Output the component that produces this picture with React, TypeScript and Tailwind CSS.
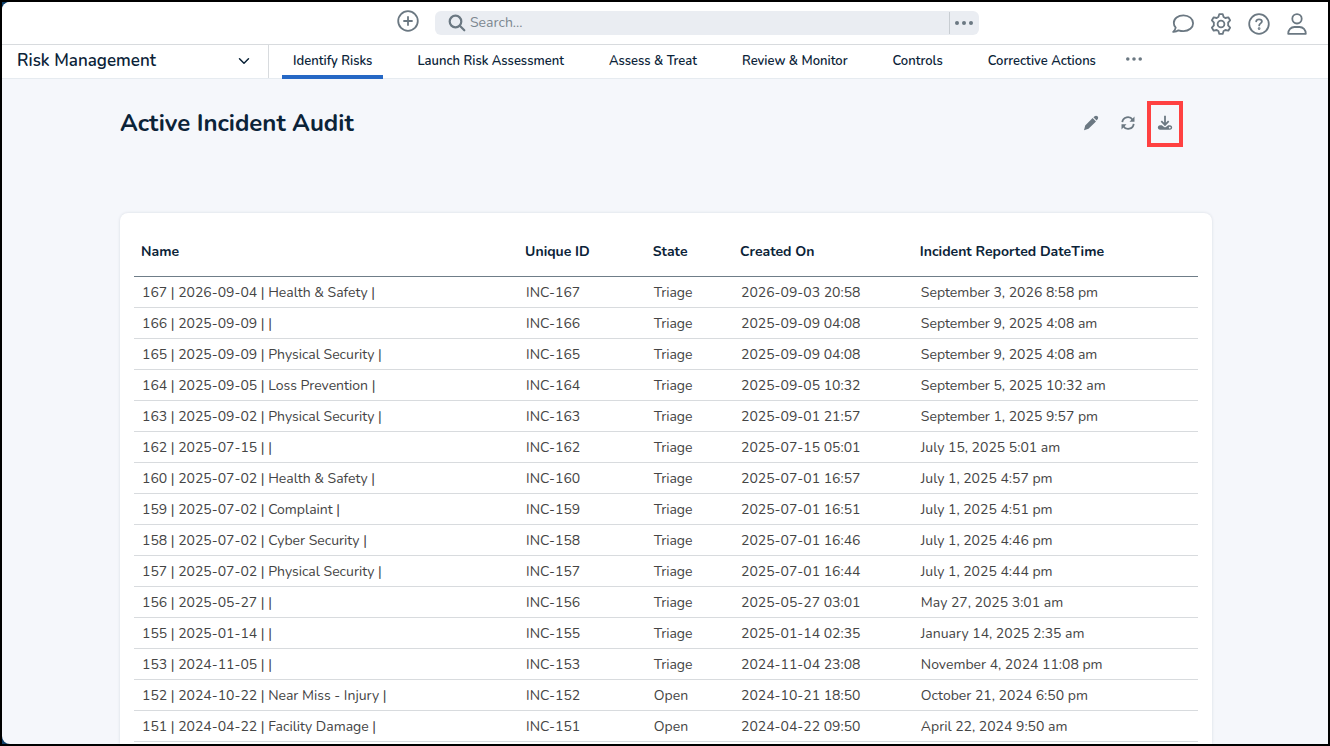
import { ChevronDown } from "lucide-react";

const tabs = [
  "Identify Risks",
  "Launch Risk Assessment",
  "Assess & Treat",
  "Review & Monitor",
  "Controls",
  "Corrective Actions",
];

const columns = [
  { label: "Name", width: "w-[36.1%]" },
  { label: "Unique ID", width: "w-[12%]" },
  { label: "State", width: "w-[8.2%]" },
  { label: "Created On", width: "w-[16.9%]" },
  { label: "Incident Reported DateTime", width: "w-[26.8%]" },
];

const incidents = [
  ["167 | 2026-09-04 | Health & Safety |", "INC-167", "Triage", "2026-09-03 20:58", "September 3, 2026 8:58 pm"],
  ["166 | 2025-09-09 | |", "INC-166", "Triage", "2025-09-09 04:08", "September 9, 2025 4:08 am"],
  ["165 | 2025-09-09 | Physical Security |", "INC-165", "Triage", "2025-09-09 04:08", "September 9, 2025 4:08 am"],
  ["164 | 2025-09-05 | Loss Prevention |", "INC-164", "Triage", "2025-09-05 10:32", "September 5, 2025 10:32 am"],
  ["163 | 2025-09-02 | Physical Security |", "INC-163", "Triage", "2025-09-01 21:57", "September 1, 2025 9:57 pm"],
  ["162 | 2025-07-15 | |", "INC-162", "Triage", "2025-07-15 05:01", "July 15, 2025 5:01 am"],
  ["160 | 2025-07-02 | Health & Safety |", "INC-160", "Triage", "2025-07-01 16:57", "July 1, 2025 4:57 pm"],
  ["159 | 2025-07-02 | Complaint |", "INC-159", "Triage", "2025-07-01 16:51", "July 1, 2025 4:51 pm"],
  ["158 | 2025-07-02 | Cyber Security |", "INC-158", "Triage", "2025-07-01 16:46", "July 1, 2025 4:46 pm"],
  ["157 | 2025-07-02 | Physical Security |", "INC-157", "Triage", "2025-07-01 16:44", "July 1, 2025 4:44 pm"],
  ["156 | 2025-05-27 | |", "INC-156", "Triage", "2025-05-27 03:01", "May 27, 2025 3:01 am"],
  ["155 | 2025-01-14 | |", "INC-155", "Triage", "2025-01-14 02:35", "January 14, 2025 2:35 am"],
  ["153 | 2024-11-05 | |", "INC-153", "Triage", "2024-11-04 23:08", "November 4, 2024 11:08 pm"],
  ["152 | 2024-10-22 | Near Miss - Injury |", "INC-152", "Open", "2024-10-21 18:50", "October 21, 2024 6:50 pm"],
  ["151 | 2024-04-22 | Facility Damage |", "INC-151", "Open", "2024-04-22 09:50", "April 22, 2024 9:50 am"],
];

const line = {
  viewBox: "0 0 22 22",
  fill: "none",
  stroke: "currentColor",
  strokeWidth: 1.8,
  strokeLinecap: "round",
  strokeLinejoin: "round",
} as const;

function PlusIcon() {
  return (
    <svg {...line} className="size-[22px]">
      <circle cx="11" cy="11" r="9.8" />
      <path d="M11 7v8M7 11h8" />
    </svg>
  );
}

function SearchIcon() {
  return (
    <svg viewBox="0 0 18 18" fill="none" stroke="currentColor" strokeWidth="2.2" strokeLinecap="round" className="size-[18px]">
      <circle cx="7.5" cy="7.5" r="5.8" />
      <path d="m11.8 11.8 4.5 4.5" />
    </svg>
  );
}

function ChatIcon() {
  return (
    <svg {...line} className="size-[22px]">
      <path d="M11.5 2.3C6 2.3 1.8 5.6 1.8 9.9c0 1.900.7 3.500 1.900 4.800-.3 1.600-1.100 2.900-2.500 4.200 2.100.1 3.900-.5 5.300-1.600 1.500.5 3.200.8 5 .8 5.500 0 9.600-3.500 9.600-7.900s-4.100-7.900-9.600-7.900z" />
    </svg>
  );
}

function GearIcon() {
  return (
    <svg {...line} className="size-[22px]">
      <circle cx="11" cy="11" r="3.4" />
      <path d="M9.300 1.100h3.400l.9 2.900q.9.400 1.700 1l3-.7 1.800 3-2 2.300q.2 1.400 0 2.800l2 2.300-1.800 3-3-.7q-.8.600-1.700 1l-.9 2.900H9.300L8.400 18q-.9-.4-1.700-1l-3 .7-1.800-3 2-2.300q-.2-1.400 0-2.800l-2-2.300 1.800-3 3 .7q.8-.6 1.700-1z" />
    </svg>
  );
}

function HelpIcon() {
  return (
    <svg {...line} className="size-[22px]">
      <circle cx="11" cy="11" r="9.8" />
      <path d="M8.200 8.300c.2-1.300 1.200-2 2.800-2s2.900.8 2.900 2.200c0 1.900-2.700 1.900-2.700 3.900" />
      <circle cx="11.1" cy="15.6" r=".5" />
    </svg>
  );
}

function UserIcon() {
  return (
    <svg {...line} className="size-[22px]">
      <circle cx="11" cy="5.8" r="4.7" />
      <path d="M2.200 20.800c0-3.900 2.700-6.800 6.300-6.800h5c3.600 0 6.300 2.900 6.300 6.800z" />
    </svg>
  );
}

function PencilIcon() {
  return (
    <svg viewBox="0 0 16 16" fill="currentColor" className="size-4">
      <path d="M9.600 3 13 6.400 5.500 13.700 1 15.200 2.200 10.500zM10.400 2.300l.9-.8c1-1 2.300-1.100 3.200-.2s.9 2.200-.1 3.300l-.8.900z" />
    </svg>
  );
}

function RefreshIcon() {
  return (
    <svg viewBox="0 0 16 16" fill="none" stroke="currentColor" strokeWidth="1.8" className="size-4">
      <path d="M2.300 7.200a5.600 5.600 0 0 1 10.300-2.400M13.700 8.800a5.600 5.600 0 0 1-10.300 2.400" />
      <path d="M14.500 1.500v5.200H9.500zM1.500 14.500V9.300h5z" fill="currentColor" stroke="none" />
    </svg>
  );
}

function DownloadIcon() {
  return (
    <svg viewBox="0 0 16 16" className="size-4">
      <path d="M8 .8v8.700M4.300 6.200 8 9.900l3.700-3.700" fill="none" stroke="currentColor" strokeWidth="1.8" />
      <path
        d="M2.800 10.300h2l2.300 1.700q.9.600 1.800 0l2.300-1.700h2q2 .3 2 2.300t-2 2.200H2.800q-2-.2-2-2.200t2-2.300zM12.800 11.700a.9.900 0 1 0 .01 0z"
        fill="currentColor"
        fillRule="evenodd"
      />
    </svg>
  );
}

function DotsIcon({ className }: { className: string }) {
  return (
    <svg viewBox="0 0 18 4" fill="currentColor" className={className}>
      <circle cx="2" cy="2" r="2" />
      <circle cx="9" cy="2" r="2" />
      <circle cx="16" cy="2" r="2" />
    </svg>
  );
}

const userActions = [
  { label: "Messages", icon: ChatIcon },
  { label: "Settings", icon: GearIcon },
  { label: "Help", icon: HelpIcon },
  { label: "Profile", icon: UserIcon },
];

export default function App() {
  return (
    <div className="h-screen overflow-hidden border-2 border-black bg-[#0f4069] font-['Nunito','Open_Sans',sans-serif] text-[#0b2338]">
      <div className="flex h-full flex-col overflow-hidden rounded-l-lg bg-[#f5f7fb]">
        <header className="flex h-[43px] shrink-0 items-center border-b border-[#d8dbde] bg-white pr-5 text-[#6b7882]">
          <div className="flex flex-1 items-center gap-4 pl-[395px]">
            <button aria-label="Create new" className="pb-1">
              <PlusIcon />
            </button>
            <div className="flex h-6 w-full max-w-[544px] items-center rounded-md bg-[#eaedf2]">
              <label htmlFor="search" className="pl-[13px]">
                <SearchIcon />
              </label>
              <input
                id="search"
                type="text"
                placeholder="Search..."
                className="min-w-0 flex-1 bg-transparent px-1 text-sm outline-none placeholder:text-[#7c8790]"
              />
              <button aria-label="Search options" className="flex h-[22px] w-[30px] items-center justify-center border-l border-[#c8cdd2] pr-0.5">
                <DotsIcon className="h-1 w-[18px]" />
              </button>
            </div>
          </div>
          <div className="flex gap-4 pt-0.5">
            {userActions.map((action) => (
              <button key={action.label} aria-label={action.label}>
                <action.icon />
              </button>
            ))}
          </div>
        </header>

        <nav className="flex h-[34px] shrink-0 items-stretch border-b border-[#e6ebf0] bg-white">
          <button className="flex w-[267px] items-center justify-between border-r border-[#d8dbde] pr-[15px] pb-0.5 pl-[15px] text-[17px] font-semibold">
            Risk Management
            <ChevronDown className="size-[18px]" />
          </button>
          <div className="-mb-px flex gap-[23px] pl-[13px] text-[13px] font-semibold">
            {tabs.map((tab, i) => (
              <a
                key={tab}
                href="#"
                className={`flex items-center border-b-4 px-[11px] pt-1 ${i === 0 ? "border-[#2668c5]" : "border-transparent"}`}
              >
                {tab}
              </a>
            ))}
            <button aria-label="More tabs" className="-ml-1 pb-1.5 text-[#6b7882]">
              <DotsIcon className="h-1 w-4" />
            </button>
          </div>
        </nav>

        <main className="flex min-h-0 flex-1 flex-col pr-[116px] pl-[118px]">
          <div className="flex shrink-0 items-center justify-between pt-[22px] pr-[29px] pb-[66px]">
            <h1 className="pb-0.5 text-2xl font-bold">Active Incident Audit</h1>
            <div className="flex items-center gap-px text-[#6b7882]">
              <button aria-label="Edit" className="px-2.5 pb-0.5">
                <PencilIcon />
              </button>
              <button aria-label="Refresh" className="px-2.5 pb-0.5">
                <RefreshIcon />
              </button>
              <button aria-label="Download" className="flex h-[46px] w-9 items-center justify-center border-4 border-[#ff4141] pb-0.5">
                <DownloadIcon />
              </button>
            </div>
          </div>

          <section className="flex-1 rounded-t-lg bg-white px-3.5 pt-3.5 shadow-[0_0_3px_#d5dae2]">
            <table className="w-full table-fixed text-left text-sm">
              <thead>
                <tr className="h-[49px] border-b border-[#6f7d88]">
                  {columns.map((column) => (
                    <th key={column.label} className={`px-[7px] pt-px font-bold whitespace-nowrap ${column.width}`}>
                      {column.label}
                    </th>
                  ))}
                </tr>
              </thead>
              <tbody className="text-[#444444]">
                {incidents.map((incident) => (
                  <tr key={incident[1]} className="h-[31px] border-b border-[#d8dbde]">
                    {incident.map((value, i) => (
                      <td key={i} className="px-2 pt-0.5 whitespace-nowrap">
                        {value}
                      </td>
                    ))}
                  </tr>
                ))}
              </tbody>
            </table>
          </section>
        </main>
      </div>
    </div>
  );
}
